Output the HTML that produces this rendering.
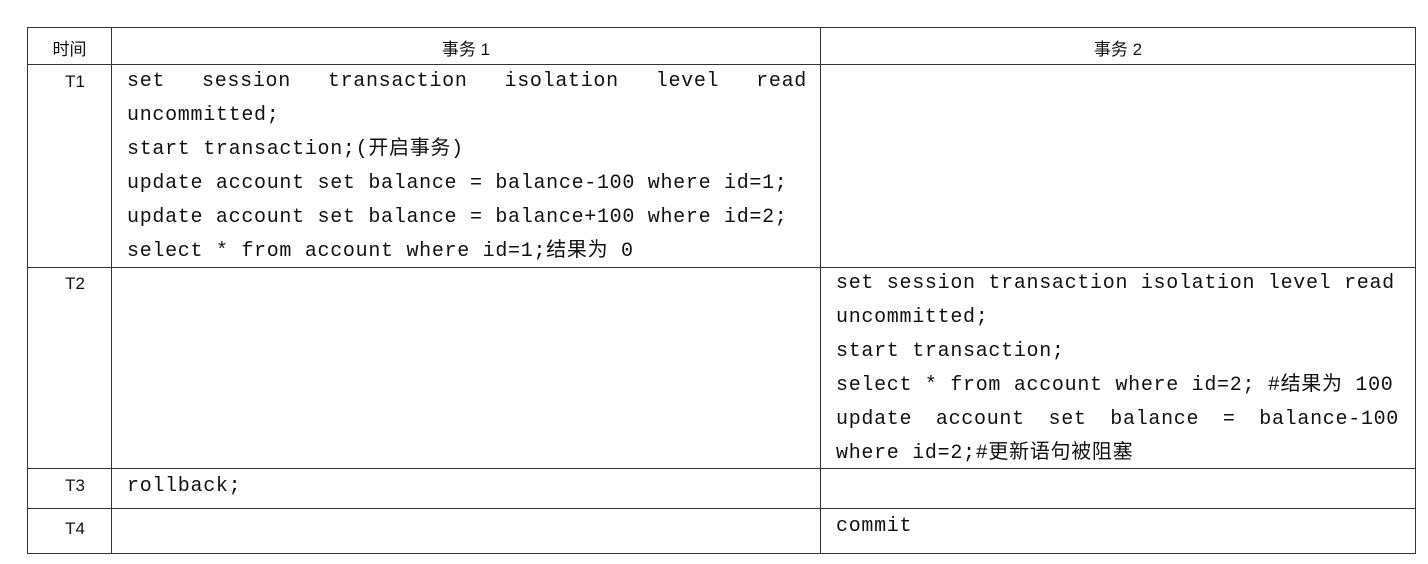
<!DOCTYPE html>
<html><head><meta charset="utf-8"><style>
body{margin:0;background:#fff;width:1428px;height:564px;position:relative;overflow:hidden}
.b{position:absolute;background:#333}
.t{position:absolute;font-family:"Liberation Sans","Noto Sans CJK SC",sans-serif;font-size:17px;color:#111;text-align:center}
.c{position:absolute;font-family:"Liberation Mono","Noto Sans CJK SC",monospace;font-size:20px;letter-spacing:0.7px;color:#111;line-height:34px;white-space:pre}
.j{text-align:justify;text-align-last:justify;white-space:normal}
</style></head><body>
<div class="b" style="left:27px;top:27px;width:1389px;height:1px"></div>
<div class="b" style="left:27px;top:64px;width:1389px;height:1px"></div>
<div class="b" style="left:27px;top:267px;width:1389px;height:1px"></div>
<div class="b" style="left:27px;top:468px;width:1389px;height:1px"></div>
<div class="b" style="left:27px;top:508px;width:1389px;height:1px"></div>
<div class="b" style="left:27px;top:553px;width:1389px;height:1px"></div>
<div class="b" style="left:27px;top:27px;width:1px;height:527px"></div>
<div class="b" style="left:111px;top:27px;width:1px;height:527px"></div>
<div class="b" style="left:820px;top:27px;width:1px;height:527px"></div>
<div class="b" style="left:1415px;top:27px;width:1px;height:527px"></div>

<div class="t" style="left:28px;top:35px;width:83px">时间</div>
<div class="t" style="left:112px;top:35px;width:708px">事务 1</div>
<div class="t" style="left:821px;top:35px;width:594px">事务 2</div>
<div class="t" style="left:40px;top:72px;width:70px">T1</div>
<div class="t" style="left:40px;top:274px;width:70px">T2</div>
<div class="t" style="left:40px;top:476px;width:70px">T3</div>
<div class="t" style="left:40px;top:519px;width:70px">T4</div>

<div class="c" style="left:127px;top:65px;width:680px"><div class="j">set session transaction isolation level read</div>uncommitted;
start transaction;(开启事务)
update account set balance = balance-100 where id=1;
update account set balance = balance+100 where id=2;
select * from account where id=1;结果为 0</div>

<div class="c" style="left:836px;top:267px;width:563px">set session transaction isolation level read
uncommitted;
start transaction;
select * from account where id=2; #结果为 100
<div class="j">update account set balance = balance-100</div>where id=2;#更新语句被阻塞</div>

<div class="c" style="left:127px;top:470px">rollback;</div>
<div class="c" style="left:836px;top:510px">commit</div>
</body></html>
